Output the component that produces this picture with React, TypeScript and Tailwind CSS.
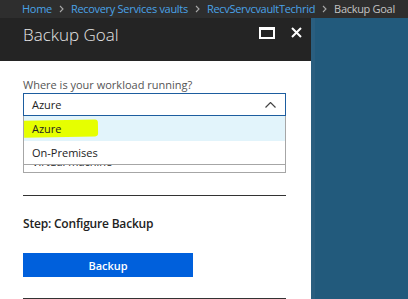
import React from "react"

const font = { fontFamily: '"Open Sans", "Noto Sans", sans-serif' }

function Sep() {
  return (
    <svg width="5" height="8" viewBox="0 0 5 8" className="shrink-0">
      <path d="M1 1l3 3-3 3" fill="none" stroke="#a8a8a8" strokeWidth="1.1" />
    </svg>
  )
}

export default function App() {
  return (
    <div className="w-[408px] h-[299px] overflow-hidden bg-[#2e2e2e] flex flex-col" style={font}>
      {/* breadcrumb */}
      <div className="h-[18px] shrink-0 flex items-center pl-[22px] gap-[7px] text-[11px] tracking-[-0.3px] leading-[18px] bg-[#2e2e2e] whitespace-nowrap">
        <span className="text-[#4aa3e8]">Home</span>
        <Sep />
        <span className="text-[#4aa3e8]">Recovery Services vaults</span>
        <Sep />
        <span className="text-[#4aa3e8]">RecvServcvaultTechrid</span>
        <Sep />
        <span className="text-[#c4c4c4]">Backup Goal</span>
      </div>

      <div className="flex flex-1 min-h-0">
        {/* blade */}
        <div className="w-[311px] shrink-0 flex flex-col bg-white">
          <div className="h-[43px] shrink-0 bg-[#242424] flex items-start pl-[23px] pr-[9px]">
            <h1 className="mt-[5px] text-[17px] leading-[24px] font-light text-[#e6e6e6] flex-1">Backup Goal</h1>
            <div className="mt-[9px] w-[16px] h-[12px] border-2 border-t-[3px] border-white" />
            <svg width="11" height="11" viewBox="0 0 11 11" className="mt-[9px] ml-[16px]">
              <path d="M1 1l9 9M10 1l-9 9" stroke="#ffffff" strokeWidth="2" />
            </svg>
          </div>

          <div className="pl-[23px] w-[286px] flex flex-col text-[11px] leading-[15px] text-[#222]">
            <label className="mt-[16px] text-[#555]">Where is your workload running?</label>
            <div className="relative mt-[1px]">
              <div className="h-[23px] border border-[#1d5d9f] flex items-center pl-[8px] pr-[9px]">
                <span className="flex-1">Azure</span>
                <svg width="11" height="6" viewBox="0 0 11 6">
                  <path d="M0.5 5.5l5-5 5 5" fill="none" stroke="#444" strokeWidth="1.2" />
                </svg>
              </div>
              {/* open list */}
              <div className="absolute left-0 right-0 top-[23px] z-10 bg-white border border-t-0 border-[#a6a6a6]">
                <div className="relative h-[25px] bg-[#e2f4fb] flex items-center pl-[8px]">
                  <div className="absolute left-0 top-[4px] w-[74px] h-[17px] bg-[#e6ff00] rounded-r-[3px] -rotate-1" />
                  <span className="relative">Azure</span>
                </div>
                <div className="h-[23px] flex items-center pl-[8px]">On-Premises</div>
              </div>
            </div>
            {/* second field, mostly covered by the open list */}
            <div className="mt-[34px] h-[23px] border border-[#a6a6a6] flex items-center pl-[8px]">
              Virtual machine
            </div>

            <div className="mt-[22px] border-t border-[#333]" />
            <h2 className="mt-[20px] text-[12px] tracking-[-0.2px] font-semibold text-[#222]">Step: Configure Backup</h2>
            <button className="mt-[22px] w-[170px] h-[24px] bg-[#0060dc] text-white font-semibold text-[11px]">
              Backup
            </button>
            <div className="mt-[21px] border-t border-[#333]" />
          </div>
        </div>

        {/* background blade */}
        <div className="flex-1 bg-[#225a7c] border-l-4 border-[#2a5e7f]" />
      </div>
    </div>
  )
}
